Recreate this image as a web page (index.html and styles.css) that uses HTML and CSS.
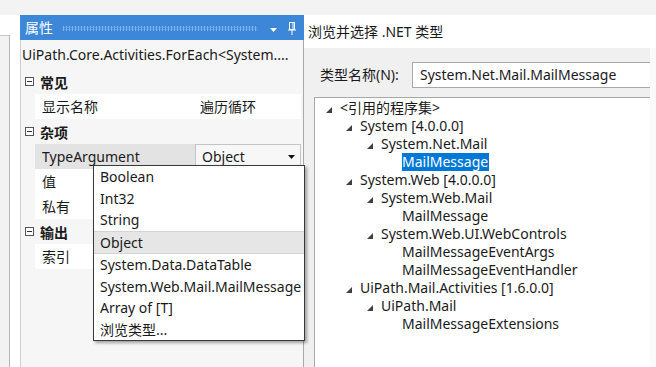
FILE: index.html
```html
<!DOCTYPE html>
<html>
<head>
<meta charset="utf-8">
<link rel="stylesheet" href="styles.css">
</head>
<body>
<div class="topstrip"></div>
<div class="main">
  <div class="gutter"><div class="gutter-frame"></div></div>
  <section class="props">
    <header class="props-head">
      <span class="props-title">属性</span>
      <span class="grip"></span>
      <svg class="hd-arrow" width="7" height="4" viewBox="0 0 7 4"><polygon points="0,0 7,0 3.5,4" fill="#ffffff"/></svg>
      <svg class="pin" width="8" height="13" viewBox="0 0 8 13"><rect x="1.5" y="0.5" width="5" height="7" fill="none" stroke="#ffffff"/><line x1="0" y1="8" x2="8" y2="8" stroke="#ffffff"/><line x1="4" y1="8" x2="4" y2="13" stroke="#ffffff"/><line x1="5" y1="1" x2="5" y2="7" stroke="#ffffff"/></svg>
    </header>
    <div class="props-body">
      <div class="props-info">UiPath.Core.Activities.ForEach&lt;System....</div>
      <div class="grid">
        <div class="cat"><span class="toggle"></span>常见</div>
        <div class="row"><span class="name">显示名称</span><span class="val">遍历循环</span></div>
        <div class="cat"><span class="toggle"></span>杂项</div>
        <div class="row selected"><span class="name">TypeArgument</span><span class="val combo">Object<svg class="combo-arrow" width="7" height="4" viewBox="0 0 7 4"><polygon points="0,0 7,0 3.5,4" fill="#111111"/></svg></span></div>
        <div class="row"><span class="name">值</span><span class="val"></span></div>
        <div class="row"><span class="name">私有</span><span class="val"></span></div>
        <div class="cat"><span class="toggle"></span>输出</div>
        <div class="row"><span class="name">索引</span><span class="val"></span></div>
      </div>
    </div>
  </section>
  <section class="dialog">
    <div class="dlg-title">浏览并选择 .NET 类型</div>
    <div class="dlg-body">
      <div class="namerow">
        <span class="namelabel">类型名称(N):</span>
        <div class="textbox">System.Net.Mail.MailMessage</div>
      </div>
      <div class="tree">
        <div class="node l0"><span class="exp"><svg width="6" height="6" viewBox="0 0 6 6"><polygon points="6,0 6,6 0,6" fill="#404040"/></svg></span>&lt;引用的程序集&gt;</div>
        <div class="node l1"><span class="exp"><svg width="6" height="6" viewBox="0 0 6 6"><polygon points="6,0 6,6 0,6" fill="#404040"/></svg></span>System [4.0.0.0]</div>
        <div class="node l2"><span class="exp"><svg width="6" height="6" viewBox="0 0 6 6"><polygon points="6,0 6,6 0,6" fill="#404040"/></svg></span>System.Net.Mail</div>
        <div class="node l3"><span class="sel">MailMessage</span></div>
        <div class="node l1"><span class="exp"><svg width="6" height="6" viewBox="0 0 6 6"><polygon points="6,0 6,6 0,6" fill="#404040"/></svg></span>System.Web [4.0.0.0]</div>
        <div class="node l2"><span class="exp"><svg width="6" height="6" viewBox="0 0 6 6"><polygon points="6,0 6,6 0,6" fill="#404040"/></svg></span>System.Web.Mail</div>
        <div class="node l3">MailMessage</div>
        <div class="node l2"><span class="exp"><svg width="6" height="6" viewBox="0 0 6 6"><polygon points="6,0 6,6 0,6" fill="#404040"/></svg></span>System.Web.UI.WebControls</div>
        <div class="node l3">MailMessageEventArgs</div>
        <div class="node l3">MailMessageEventHandler</div>
        <div class="node l1"><span class="exp"><svg width="6" height="6" viewBox="0 0 6 6"><polygon points="6,0 6,6 0,6" fill="#404040"/></svg></span>UiPath.Mail.Activities [1.6.0.0]</div>
        <div class="node l2"><span class="exp"><svg width="6" height="6" viewBox="0 0 6 6"><polygon points="6,0 6,6 0,6" fill="#404040"/></svg></span>UiPath.Mail</div>
        <div class="node l3">MailMessageExtensions</div>
      </div>
    </div>
  </section>
</div>
<div class="dropdown">
  <div class="item">Boolean</div>
  <div class="item">Int32</div>
  <div class="item">String</div>
  <div class="item hover">Object</div>
  <div class="item">System.Data.DataTable</div>
  <div class="item">System.Web.Mail.MailMessage</div>
  <div class="item">Array of [T]</div>
  <div class="item">浏览类型...</div>
</div>
</body>
</html>
```

FILE: styles.css
```css
* { box-sizing: border-box; }
html, body { margin: 0; padding: 0; }
body {
  width: 656px;
  height: 367px;
  overflow: hidden;
  position: relative;
  background: #f3f3f3;
  font-family: "Noto Sans", "Noto Sans CJK SC", sans-serif;
  font-size: 14px;
  color: #1a1a1a;
  display: flex;
  flex-direction: column;
}
.topstrip { height: 15px; flex: none; background: #f3f3f3; }
.main { flex: 1; display: flex; min-height: 0; }

.gutter { width: 20px; flex: none; background: #ffffff; display: flex; }
.gutter-frame {
  margin-top: 20px;
  width: 10px;
  background: #f2f2f2;
  border-top: 1px solid #c8c8c8;
  border-right: 1px solid #b4b4b4;
}

.props { width: 284px; flex: none; display: flex; flex-direction: column; }
.props-head {
  height: 25px;
  flex: none;
  background: #3d87d9;
  display: flex;
  align-items: center;
  padding-left: 5px;
  padding-right: 8px;
}
.props-title { color: #ffffff; font-size: 14px; line-height: 25px; }
.grip {
  flex: 1;
  height: 5px;
  margin: 2px 12px 0 9px;
  background-image: radial-gradient(circle, #7fb1ea 0.9px, transparent 1.1px);
  background-size: 3px 2.5px;
}
.hd-arrow { margin-top: 4px; margin-right: 11px; }
.pin { margin-top: 1px; }

.props-body {
  flex: 1;
  display: flex;
  flex-direction: column;
  background: #f6f6f6;
  border-left: 1px solid #cfcfcf;
  border-right: 1px solid #a9a9a9;
}
.props-info {
  height: 29px;
  flex: none;
  padding-left: 1px;
  line-height: 29px;
  white-space: nowrap;
  overflow: hidden;
}
.grid { padding-right: 2px; }
.cat {
  height: 25px;
  display: flex;
  align-items: center;
  padding-left: 4px;
  font-weight: bold;
}
.toggle {
  width: 9px;
  height: 9px;
  border: 1px solid #555555;
  margin-right: 6px;
  position: relative;
  background: #ffffff;
}
.toggle::after {
  content: "";
  position: absolute;
  left: 1px;
  right: 1px;
  top: 3px;
  height: 1px;
  background: #333333;
}
.row {
  height: 25px;
  display: flex;
  margin-left: 14px;
  background: #ffffff;
}
.name { width: 160px; padding-left: 7px; line-height: 25px; }
.val { flex: 1; padding-left: 5px; line-height: 25px; }
.row.selected .name { background: #e3e3e3; }
.combo {
  display: flex;
  align-items: center;
  justify-content: space-between;
  background: #f7f7f7;
  border: 1px solid #c4c4c4;
  padding-left: 6px;
  padding-right: 5px;
  line-height: 23px;
}
.combo-arrow { margin-top: 1px; }

.dialog { flex: 1; display: flex; flex-direction: column; min-width: 0; }
.dlg-title {
  height: 33px;
  flex: none;
  background: #ffffff;
  padding-left: 4px;
  font-size: 14px;
  line-height: 34px;
  white-space: nowrap;
}
.dlg-body {
  flex: 1;
  display: flex;
  flex-direction: column;
  background: #f0f0f0;
  padding-left: 10px;
  border-right: 6px solid #fafafa;
  min-height: 0;
}
.namerow {
  height: 49px;
  flex: none;
  display: flex;
  align-items: flex-start;
  padding-top: 14px;
}
.namelabel { width: 98px; padding-left: 6px; line-height: 26px; white-space: nowrap; }
.textbox {
  flex: 1;
  height: 26px;
  background: #ffffff;
  border: 1px solid #a8a8a8;
  border-right: none;
  padding-left: 7px;
  line-height: 24px;
  white-space: nowrap;
}
.tree {
  flex: 1;
  background: #ffffff;
  border-top: 1px solid #a8a8a8;
  border-left: 1px solid #a8a8a8;
  padding-top: 1px;
}
.node {
  height: 18px;
  line-height: 18px;
  display: flex;
  align-items: center;
  white-space: nowrap;
}
.exp { width: 14px; flex: none; display: flex; align-items: center; padding-top: 4px; }
.l0 { padding-left: 11px; }
.l1 { padding-left: 31px; }
.l2 { padding-left: 52px; }
.l3 { padding-left: 87px; }
.sel {
  background: #0078d7;
  color: #ffffff;
  padding: 0 1px 0 0;
  line-height: 18px;
}

.dropdown {
  position: absolute;
  left: 93px;
  top: 165px;
  width: 212px;
  height: 176px;
  background: #ffffff;
  border: 1px solid #3a3a3a;
  box-shadow: 2px 2px 3px rgba(0, 0, 0, 0.35);
  display: flex;
  flex-direction: column;
}
.item {
  flex: 1;
  display: flex;
  align-items: center;
  padding-left: 6px;
  white-space: nowrap;
}
.item.hover {
  background: #e6e6e6;
  border-top: 1px solid #d4d4d4;
  border-bottom: 1px solid #d4d4d4;
}
```
